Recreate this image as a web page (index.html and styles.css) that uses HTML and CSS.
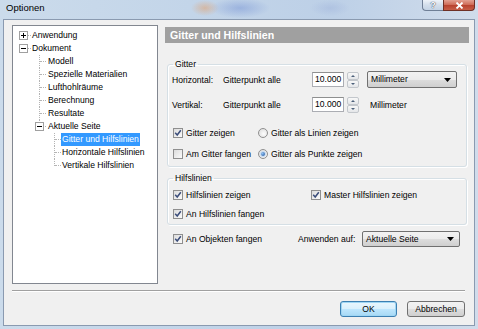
FILE: index.html
```html
<!DOCTYPE html>
<html lang="de">
<head>
  <meta charset="UTF-8" />
  <title>Optionen</title>
  <link rel="stylesheet" href="styles.css">
</head>
<body>
  <div class="window">
    <div class="titlebar">
      <span class="title">Optionen</span>
      <div class="ctrl">
        <span class="btn-help">?</span>
        <span class="btn-close">
          <svg width="9" height="7" viewBox="0 0 9 7"><path d="M1.5 0.5L7.5 6.5M7.5 0.5L1.5 6.5" stroke="#fff" stroke-width="1.8"/></svg>
        </span>
      </div>
    </div>

    <div class="client">
      <div class="main">
        <div class="tree">
          <div class="node l0">
            <svg class="exp" width="9" height="9"><rect x=".5" y=".5" width="8" height="8" fill="#fff" stroke="#a0a0a0"/><path d="M2 4.5h5M4.5 2v5" stroke="#000"/></svg>
            <span class="txt">Anwendung</span>
          </div>
          <div class="node l0">
            <svg class="exp" width="9" height="9"><rect x=".5" y=".5" width="8" height="8" fill="#fff" stroke="#a0a0a0"/><path d="M2 4.5h5" stroke="#000"/></svg>
            <span class="txt">Dokument</span>
          </div>
          <div class="node l1"><span class="txt">Modell</span></div>
          <div class="node l1"><span class="txt">Spezielle Materialien</span></div>
          <div class="node l1"><span class="txt">Lufthohlräume</span></div>
          <div class="node l1"><span class="txt">Berechnung</span></div>
          <div class="node l1"><span class="txt">Resultate</span></div>
          <div class="node l1 last">
            <svg class="exp" width="9" height="9"><rect x=".5" y=".5" width="8" height="8" fill="#fff" stroke="#a0a0a0"/><path d="M2 4.5h5" stroke="#000"/></svg>
            <span class="txt">Aktuelle Seite</span>
          </div>
          <div class="node l2"><span class="txt sel">Gitter und Hilfslinien</span></div>
          <div class="node l2"><span class="txt">Horizontale Hilfslinien</span></div>
          <div class="node l2 last"><span class="txt">Vertikale Hilfslinien</span></div>
        </div>

        <div class="panel">
          <div class="phead">Gitter und Hilfslinien</div>

          <fieldset class="group grid">
            <legend>Gitter</legend>
            <div class="frow">
              <span class="flabel">Horizontal:</span>
              <span class="fname">Gitterpunkt alle</span>
              <span class="num">10.000</span>
              <span class="spin"><span class="up"></span><span class="down"></span></span>
              <span class="combo unit">Millimeter<svg class="arrow" width="7" height="4"><path d="M0 0h7L3.5 4z" fill="#000"/></svg></span>
            </div>
            <div class="frow second">
              <span class="flabel">Vertikal:</span>
              <span class="fname">Gitterpunkt alle</span>
              <span class="num">10.000</span>
              <span class="spin"><span class="up"></span><span class="down"></span></span>
              <span class="unit-text">Millimeter</span>
            </div>
            <div class="crow r3">
              <span class="cell c1"><span class="box on"><svg width="8" height="8"><path d="M1.2 3.8L3.2 6L6.8 1.2" fill="none" stroke="#3b4d7a" stroke-width="1.5"/></svg></span>Gitter zeigen</span>
              <span class="cell"><span class="radio"></span>Gitter als Linien zeigen</span>
            </div>
            <div class="crow r4">
              <span class="cell c1"><span class="box"></span>Am Gitter fangen</span>
              <span class="cell"><span class="radio on"><span class="dot"></span></span>Gitter als Punkte zeigen</span>
            </div>
          </fieldset>

          <fieldset class="group guides">
            <legend>Hilfslinien</legend>
            <div class="crow g1">
              <span class="cell c2"><span class="box on"><svg width="8" height="8"><path d="M1.2 3.8L3.2 6L6.8 1.2" fill="none" stroke="#3b4d7a" stroke-width="1.5"/></svg></span>Hilfslinien zeigen</span>
              <span class="cell"><span class="box on"><svg width="8" height="8"><path d="M1.2 3.8L3.2 6L6.8 1.2" fill="none" stroke="#3b4d7a" stroke-width="1.5"/></svg></span>Master Hilfslinien zeigen</span>
            </div>
            <div class="crow g2">
              <span class="cell c2"><span class="box on"><svg width="8" height="8"><path d="M1.2 3.8L3.2 6L6.8 1.2" fill="none" stroke="#3b4d7a" stroke-width="1.5"/></svg></span>An Hilfslinien fangen</span>
            </div>
          </fieldset>

          <div class="lastrow">
            <span class="cell c3"><span class="box on"><svg width="8" height="8"><path d="M1.2 3.8L3.2 6L6.8 1.2" fill="none" stroke="#3b4d7a" stroke-width="1.5"/></svg></span>An Objekten fangen</span>
            <span class="applabel">Anwenden auf:</span>
            <span class="combo page">Aktuelle Seite<svg class="arrow" width="7" height="4"><path d="M0 0h7L3.5 4z" fill="#000"/></svg></span>
          </div>
        </div>
      </div>

      <div class="sep"></div>
      <div class="buttons">
        <span class="button default">OK</span>
        <span class="button">Abbrechen</span>
      </div>
    </div>
  </div>
</body>
</html>
```

FILE: styles.css
```css
body {
  margin: 0;
  width: 478px;
  height: 329px;
  overflow: hidden;
  font-family: "Liberation Sans", Arial, sans-serif;
  font-size: 8.6px;
  color: #000;
  background:
    radial-gradient(ellipse 14px 8px at 205px 8px, rgba(225,160,110,0.55), transparent),
    radial-gradient(ellipse 30px 10px at 240px 8px, rgba(110,140,210,0.45), transparent),
    radial-gradient(ellipse 20px 8px at 330px 8px, rgba(150,170,215,0.35), transparent),
    linear-gradient(90deg, #cbdbeb, #c3d5e9 40%, #bdd0e7 70%, #d0dceb);
}
.window {
  display: flex;
  flex-direction: column;
  height: 329px;
}

/* title bar */
.titlebar {
  height: 19px;
  display: flex;
  align-items: flex-start;
}
.title {
  font-size: 9.5px;
  line-height: 11px;
  padding: 2px 0 0 6px;
}
.ctrl {
  margin-left: auto;
  margin-right: 3px;
  display: flex;
}
.btn-help, .btn-close {
  box-sizing: border-box;
  height: 11px;
  display: flex;
  align-items: center;
  justify-content: center;
  border: 1px solid #6f7f96;
  border-top: none;
}
.btn-help {
  width: 21px;
  border-right: none;
  border-radius: 0 0 0 4px;
  background: linear-gradient(#eef3f9, #d3deeb 50%, #c4d3e5);
  font-size: 9px;
  font-weight: bold;
  color: #fff;
  text-shadow: 0 0 1px #34435a, 0 0 1px #34435a;
}
.btn-close {
  width: 32px;
  border-color: #6e3026;
  border-radius: 0 0 4px 0;
  background: linear-gradient(#e3a091, #cf6e5a 45%, #b8432f 55%, #c75f48);
}

/* client area */
.client {
  flex: 1;
  margin: 0 3px 3px;
  background: #f0f0f0;
  border: 1px solid #8a9ab0;
  display: flex;
  flex-direction: column;
}
.main {
  display: flex;
  gap: 5px;
  height: 259px;
  padding: 5px 0 0 8px;
}

/* tree */
.tree {
  width: 146px;
  height: 259px;
  box-sizing: border-box;
  background: #fff;
  border: 1px solid #828790;
  padding-top: 3px;
}
.node {
  position: relative;
  height: 13px;
  line-height: 13px;
  white-space: nowrap;
}
.node .exp {
  position: absolute;
  top: 2px;
  z-index: 1;
}
.l0 { padding-left: 19px; }
.l0 .exp { left: 6px; }
.l0::after {
  content: "";
  position: absolute;
  left: 15px;
  top: 6px;
  width: 3px;
  border-top: 1px dotted #b4b4b4;
}
.l1 { padding-left: 35px; }
.l1 .exp { left: 22px; }
.l2 { padding-left: 48px; }
.l1::before, .l2::before {
  content: "";
  position: absolute;
  top: 0;
  height: 13px;
  border-left: 1px dotted #b4b4b4;
}
.l1::before { left: 26px; }
.l2::before { left: 41px; }
.l1.last::before, .l2.last::before { height: 7px; }
.l1::after, .l2::after {
  content: "";
  position: absolute;
  top: 6px;
  width: 6px;
  border-top: 1px dotted #b4b4b4;
}
.l1::after { left: 27px; }
.l2::after { left: 42px; }
.l2 .txt { padding: 0 1px; }
.txt.sel {
  background: #3399ff;
  color: #fff;
  display: inline-block;
  line-height: 13px;
}

/* right panel */
.panel {
  flex: 1;
  padding: 2px 5px 0 2px;
}
.phead {
  height: 16px;
  line-height: 16px;
  background: #a0a0a0;
  color: #fff;
  font-weight: bold;
  font-size: 10.6px;
  padding-left: 5px;
}
.group {
  border: 1px solid #d5dfe5;
  border-radius: 3px;
  margin: 0 2px;
  padding: 0 4px 5px;
  min-width: 0;
  box-shadow: inset 1px 1px 0 #fff, 1px 1px 0 #fff;
}
.group legend {
  padding: 0 2px;
  margin-left: 1px;
  line-height: 11px;
}
.grid { margin-top: 16px; }
.guides { margin-top: 6px; padding-bottom: 3px; }

.frow {
  display: flex;
  align-items: center;
  height: 17px;
  margin-top: 1px;
}
.frow.second { margin-top: 8px; }
.flabel { width: 51px; }
.fname { width: 89px; }
.num {
  box-sizing: border-box;
  width: 32px;
  height: 15px;
  line-height: 13px;
  background: #fff;
  border: 1px solid #abadb3;
  border-top-color: #8e8f8f;
  padding-left: 2px;
}
.spin {
  box-sizing: border-box;
  width: 12px;
  height: 16px;
  margin-left: 3px;
  display: flex;
  flex-direction: column;
}
.spin span {
  flex: 1;
  position: relative;
  border: 1px solid #c3c7cc;
  border-radius: 2px;
  background: linear-gradient(#f8f8f8, #e4e6e9);
}
.spin span::after {
  content: "";
  position: absolute;
  left: 3px;
  top: 2px;
  border-left: 2px solid transparent;
  border-right: 2px solid transparent;
}
.spin .up::after { border-bottom: 2px solid #4c607a; }
.spin .down::after { border-top: 2px solid #4c607a; }

.combo {
  box-sizing: border-box;
  position: relative;
  height: 17px;
  line-height: 15px;
  padding-left: 3px;
  border: 1px solid #707070;
  border-radius: 2px;
  background: linear-gradient(#f2f2f2, #ebebeb 50%, #dddddd 51%, #cfcfcf);
}
.combo .arrow {
  position: absolute;
  right: 5px;
  top: 6px;
}
.unit { width: 90px; margin-left: 8px; }
.unit-text { margin-left: 11px; }

.crow {
  display: flex;
  align-items: center;
  height: 14px;
}
.r3 { margin-top: 13px; }
.r4 { margin-top: 7px; }
.g1 { margin-top: 4px; }
.g2 { margin-top: 5px; }
.cell {
  display: flex;
  align-items: center;
  white-space: nowrap;
}
.c1 { width: 85px; }
.c2 { width: 138px; }
.c3 { width: 126px; }

.box {
  box-sizing: border-box;
  width: 10px;
  height: 10px;
  margin: 0 3px 0 1px;
  border: 1px solid #8f8f8f;
  background: linear-gradient(135deg, #dcdcdc, #fbfbfb);
  display: flex;
  align-items: center;
  justify-content: center;
}
.radio {
  box-sizing: border-box;
  width: 10px;
  height: 10px;
  margin: 0 3px 0 1px;
  border: 1px solid #8f8f8f;
  border-radius: 50%;
  background: radial-gradient(circle at 60% 60%, #fdfdfd, #d8d8d8);
  display: flex;
  align-items: center;
  justify-content: center;
}
.radio .dot {
  width: 4px;
  height: 4px;
  border-radius: 50%;
  background: radial-gradient(circle at 35% 35%, #8fc2f5, #1b4e97);
  box-shadow: 0 0 0 1px #c7dcf3;
}

.lastrow {
  display: flex;
  align-items: center;
  height: 16px;
  margin-top: 6px;
  padding-left: 7px;
}
.applabel { width: 64px; }
.combo.page {
  width: 98px;
  height: 16px;
  line-height: 14px;
}
.combo.page .arrow { top: 5px; }

/* bottom */
.sep {
  margin: 6px 9px 0 8px;
  height: 1px;
  background: #a0a0a0;
  border-bottom: 1px solid #fff;
}
.buttons {
  display: flex;
  justify-content: flex-end;
  gap: 10px;
  margin-top: 9px;
  padding-right: 9px;
}
.button {
  box-sizing: border-box;
  width: 58px;
  height: 16px;
  line-height: 14px;
  text-align: center;
  border: 1px solid #707070;
  border-radius: 3px;
  background: linear-gradient(#f2f2f2, #ebebeb 50%, #dddddd 51%, #cfcfcf);
}
.button.default {
  width: 57px;
  border-color: #3c7fb1;
  background: linear-gradient(#eaf6fd, #d9f0fc 50%, #bee6fd 51%, #a7d9f5);
  box-shadow: inset 0 0 0 1px #9fd6f4;
}
```
